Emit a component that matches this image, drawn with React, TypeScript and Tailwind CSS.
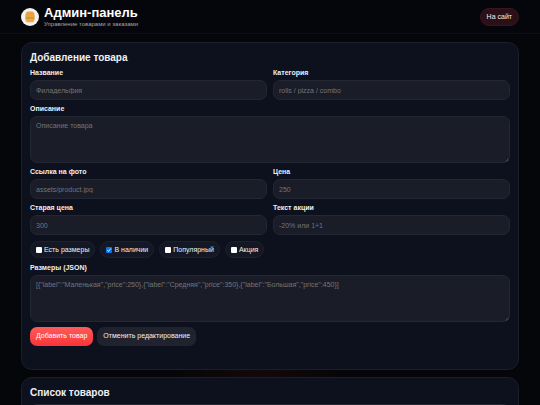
import { useState } from "react";
import type { ReactNode } from "react";

const fieldClass =
  "block w-full rounded-[7px] border border-[#232733] bg-[#1a1d28] px-[5px] text-[7px] text-gray-100 placeholder:text-[#72747b] outline-none";

const flags = [
  { name: "hasSizes", label: "Есть размеры", checked: false },
  { name: "inStock", label: "В наличии", checked: true },
  { name: "popular", label: "Популярный", checked: false },
  { name: "promo", label: "Акция", checked: false },
];

function BurgerLogo() {
  return (
    <svg viewBox="0 0 36 36" className="size-[18px] shrink-0" aria-hidden="true">
      <circle cx="18" cy="18" r="18" fill="#f3f1f0" />
      <path d="M9 16v-3c0-4 3-6 6-6h6c3 0 6 2 6 6v3z" fill="#eba143" />
      <rect x="8.500" y="18" width="19" height="4" rx="1.500" fill="#d98a3a" />
      <path d="M8.500 15.500h19v2.500l-3 1.500-3.500-1.500-3 1.500-3-1.500-3.500 1.500-3-1.500z" fill="#dcab3c" />
      <path d="M9 21.500h18v2c0 3-2 5-4.500 5h-9c-2.500 0-4.500-2-4.500-5z" fill="#eda848" />
    </svg>
  );
}

function Field({ id, label, wide, children }: { id: string; label: string; wide?: boolean; children: ReactNode }) {
  return (
    <div className={wide ? "col-span-2" : ""}>
      <label htmlFor={id} className="block pb-[3px] text-[7px] leading-[8px] font-bold text-[#eef0f5]">
        {label}
      </label>
      {children}
    </div>
  );
}

function TextInput({ id, label, placeholder }: { id: string; label: string; placeholder: string }) {
  return (
    <Field id={id} label={label}>
      <input id={id} type="text" placeholder={placeholder} className={`${fieldClass} h-5`} />
    </Field>
  );
}

function TextArea({ id, label, placeholder }: { id: string; label: string; placeholder: string }) {
  return (
    <Field id={id} label={label} wide>
      <div className="relative">
        <textarea
          id={id}
          placeholder={placeholder}
          className={`${fieldClass} h-[47px] resize-none py-[5px] leading-[8px]`}
        />
        <svg viewBox="0 0 5 5" className="absolute right-px bottom-px size-[4px]" aria-hidden="true">
          <path d="M0.500 4.500l4-4M2.500 4.500l2-2" stroke="#8a8c93" strokeWidth="0.500" />
        </svg>
      </div>
    </Field>
  );
}

function Card({ title, children }: { title: string; children: ReactNode }) {
  return (
    <section className="rounded-[11px] border border-[#1a1f2d] bg-[#0d111d] p-2">
      <h2 className="mb-[5px] text-[10px] leading-[13px] font-bold text-[#eef0f5]">{title}</h2>
      {children}
    </section>
  );
}

export default function App() {
  const [checked, setChecked] = useState(flags.map((f) => f.checked));

  const toggle = (index: number) => {
    setChecked((prev) => prev.map((value, i) => (i === index ? !value : value)));
  };

  return (
    <div className="h-screen overflow-hidden bg-[#050609] bg-[radial-gradient(ellipse_at_48%_96%,#14080c_0%,#050609_22%)] font-['Liberation_Sans',Arial,sans-serif] text-[#eef0f5]">
      <header className="flex h-[34px] items-center justify-between border-b border-[#16090f] bg-[#05060b] px-[21px]">
        <div className="flex items-center gap-[5px]">
          <BurgerLogo />
          <div>
            <h1 className="text-[13px] leading-[15px] font-bold text-white">Админ-панель</h1>
            <p className="text-[6px] leading-[8px] text-[#a4a6ae]">Управление товарами и заказами</p>
          </div>
        </div>
        <a
          href="#"
          className="rounded-full border border-[#3c141b] bg-[#2b1017] px-[6px] text-[7px] leading-4 text-[#eef0f5]"
        >
          На сайт
        </a>
      </header>

      <main className="flex flex-col gap-[7px] px-[21px] pt-2">
        <Card title="Добавление товара">
          <form onSubmit={(e) => e.preventDefault()}>
            <div className="grid grid-cols-2 gap-x-[6px] gap-y-[5px]">
              <TextInput id="name" label="Название" placeholder="Филадельфия" />
              <TextInput id="category" label="Категория" placeholder="rolls / pizza / combo" />
              <TextArea id="description" label="Описание" placeholder="Описание товара" />
              <TextInput id="image" label="Ссылка на фото" placeholder="assets/product.jpg" />
              <TextInput id="price" label="Цена" placeholder="250" />
              <TextInput id="oldPrice" label="Старая цена" placeholder="300" />
              <TextInput id="promoText" label="Текст акции" placeholder="-20% или 1+1" />

              <div className="col-span-2 flex flex-wrap gap-[5px] py-px">
                {flags.map((flag, i) => (
                  <label
                    key={flag.name}
                    className="flex h-[17px] items-center gap-[2px] rounded-full border border-[#1d212d] bg-[#141824] px-[5px] text-[7px] leading-[9px]"
                  >
                    <span className="relative block size-[6px]">
                      <input
                        type="checkbox"
                        name={flag.name}
                        checked={checked[i]}
                        onChange={() => toggle(i)}
                        className="block size-[6px] appearance-none rounded-[1px] bg-white checked:bg-[#0b74e8]"
                      />
                      {checked[i] && (
                        <svg viewBox="0 0 12 12" className="pointer-events-none absolute inset-0" aria-hidden="true">
                          <path d="M2.500 6.500l2.500 2.500 4.500-6" fill="none" stroke="#fff" strokeWidth="1.800" />
                        </svg>
                      )}
                    </span>
                    {flag.label}
                  </label>
                ))}
              </div>

              <TextArea
                id="sizes"
                label="Размеры (JSON)"
                placeholder='[{"label":"Маленькая","price":250},{"label":"Средняя","price":350},{"label":"Большая","price":450}]'
              />
            </div>

            <div className="mt-[5px] flex gap-1">
              <button
                type="submit"
                className="h-[19px] rounded-[7px] bg-linear-to-b from-[#ff5a5a] to-[#f93238] px-[6px] text-[7px] text-white"
              >
                Добавить товар
              </button>
              <button type="button" className="h-[19px] rounded-[7px] bg-[#20232e] px-[6px] text-[7px] text-[#eef0f5]">
                Отменить редактирование
              </button>
            </div>
            <p className="mt-[5px] h-[10px] text-[7px]" aria-live="polite" />
          </form>
        </Card>

        <Card title="Список товаров">
          <div className="h-12 rounded-[7px] border border-[#232733] bg-[#141824]" />
        </Card>
      </main>
    </div>
  );
}
